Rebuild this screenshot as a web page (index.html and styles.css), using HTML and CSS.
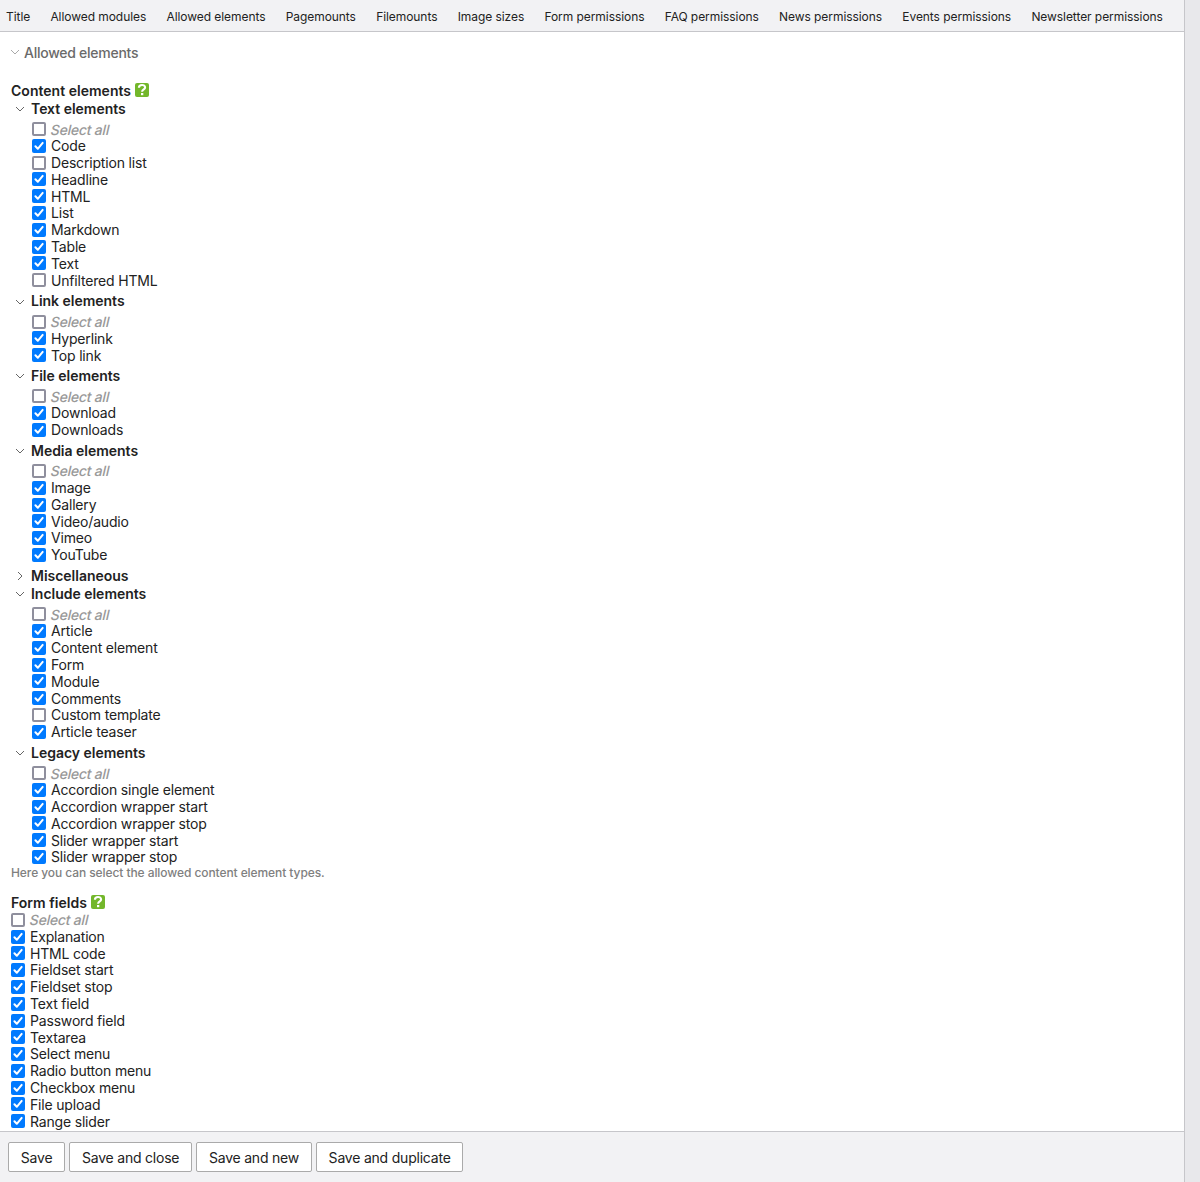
FILE: index.html
```
<!DOCTYPE html>
<html lang="en">
<head>
<meta charset="utf-8">
<title>Allowed elements</title>
<link rel="stylesheet" href="styles.css">
</head>
<body>
<svg class="sprite" width="0" height="0">
  <symbol id="down" viewBox="0 0 10 6"><path d="M1 1l4 4 4-4" fill="none" stroke="currentColor"/></symbol>
  <symbol id="right" viewBox="0 0 6 10"><path d="M1 1l4 4-4 4" fill="none" stroke="currentColor"/></symbol>
  <symbol id="help" viewBox="0 0 14 14"><rect width="14" height="14" rx="2" fill="#73b72b"/><path d="M3.9 4.7C4 2.7 5.4 2 7 2s3.1.8 3.1 2.5C10.1 6.4 7.1 6.4 7.1 8.8" fill="none" stroke="#fff" stroke-width="2.1"/><rect x="6" y="10" width="2.3" height="2.2" fill="#fff"/></symbol>
</svg>
<div class="page">
  <nav class="tabs">
    <a>Title</a><a>Allowed modules</a><a>Allowed elements</a><a>Pagemounts</a><a>Filemounts</a><a>Image sizes</a><a>Form permissions</a><a>FAQ permissions</a><a>News permissions</a><a>Events permissions</a><a>Newsletter permissions</a>
  </nav>
  <main class="content">
    <div class="legend"><svg class="chev"><use href="#down"/></svg>Allowed elements</div>
    <section class="field">
      <h3 class="title">Content elements <svg class="help"><use href="#help"/></svg></h3>
      <h4 class="group"><svg class="chev"><use href="#down"/></svg>Text elements</h4>
      <div class="list first">
        <label class="all"><input type="checkbox"><span>Select all</span></label>
        <label><input type="checkbox" checked><span>Code</span></label>
        <label><input type="checkbox"><span>Description list</span></label>
        <label><input type="checkbox" checked><span>Headline</span></label>
        <label><input type="checkbox" checked><span>HTML</span></label>
        <label><input type="checkbox" checked><span>List</span></label>
        <label><input type="checkbox" checked><span>Markdown</span></label>
        <label><input type="checkbox" checked><span>Table</span></label>
        <label><input type="checkbox" checked><span>Text</span></label>
        <label><input type="checkbox"><span>Unfiltered HTML</span></label>
      </div>
      <h4 class="group"><svg class="chev"><use href="#down"/></svg>Link elements</h4>
      <div class="list second">
        <label class="all"><input type="checkbox"><span>Select all</span></label>
        <label><input type="checkbox" checked><span>Hyperlink</span></label>
        <label><input type="checkbox" checked><span>Top link</span></label>
      </div>
      <h4 class="group"><svg class="chev"><use href="#down"/></svg>File elements</h4>
      <div class="list">
        <label class="all"><input type="checkbox"><span>Select all</span></label>
        <label><input type="checkbox" checked><span>Download</span></label>
        <label><input type="checkbox" checked><span>Downloads</span></label>
      </div>
      <h4 class="group"><svg class="chev"><use href="#down"/></svg>Media elements</h4>
      <div class="list">
        <label class="all"><input type="checkbox"><span>Select all</span></label>
        <label><input type="checkbox" checked><span>Image</span></label>
        <label><input type="checkbox" checked><span>Gallery</span></label>
        <label><input type="checkbox" checked><span>Video/audio</span></label>
        <label><input type="checkbox" checked><span>Vimeo</span></label>
        <label><input type="checkbox" checked><span>YouTube</span></label>
      </div>
      <h4 class="group"><svg class="chev side"><use href="#right"/></svg>Miscellaneous</h4>
      <h4 class="group"><svg class="chev"><use href="#down"/></svg>Include elements</h4>
      <div class="list">
        <label class="all"><input type="checkbox"><span>Select all</span></label>
        <label><input type="checkbox" checked><span>Article</span></label>
        <label><input type="checkbox" checked><span>Content element</span></label>
        <label><input type="checkbox" checked><span>Form</span></label>
        <label><input type="checkbox" checked><span>Module</span></label>
        <label><input type="checkbox" checked><span>Comments</span></label>
        <label><input type="checkbox"><span>Custom template</span></label>
        <label><input type="checkbox" checked><span>Article teaser</span></label>
      </div>
      <h4 class="group"><svg class="chev"><use href="#down"/></svg>Legacy elements</h4>
      <div class="list last">
        <label class="all"><input type="checkbox"><span>Select all</span></label>
        <label><input type="checkbox" checked><span>Accordion single element</span></label>
        <label><input type="checkbox" checked><span>Accordion wrapper start</span></label>
        <label><input type="checkbox" checked><span>Accordion wrapper stop</span></label>
        <label><input type="checkbox" checked><span>Slider wrapper start</span></label>
        <label><input type="checkbox" checked><span>Slider wrapper stop</span></label>
      </div>
      <p class="tip">Here you can select the allowed content element types.</p>
    </section>
    <section class="field">
      <h3 class="title">Form fields <svg class="help"><use href="#help"/></svg></h3>
      <div class="list flat">
        <label class="all"><input type="checkbox"><span>Select all</span></label>
        <label><input type="checkbox" checked><span>Explanation</span></label>
        <label><input type="checkbox" checked><span>HTML code</span></label>
        <label><input type="checkbox" checked><span>Fieldset start</span></label>
        <label><input type="checkbox" checked><span>Fieldset stop</span></label>
        <label><input type="checkbox" checked><span>Text field</span></label>
        <label><input type="checkbox" checked><span>Password field</span></label>
        <label><input type="checkbox" checked><span>Textarea</span></label>
        <label><input type="checkbox" checked><span>Select menu</span></label>
        <label><input type="checkbox" checked><span>Radio button menu</span></label>
        <label><input type="checkbox" checked><span>Checkbox menu</span></label>
        <label><input type="checkbox" checked><span>File upload</span></label>
        <label><input type="checkbox" checked><span>Range slider</span></label>
      </div>
    </section>
  </main>
  <footer class="actions">
    <button>Save</button><button>Save and close</button><button>Save and new</button><button>Save and duplicate</button>
  </footer>
</div>
</body>
</html>
```
FILE: styles.css
```
* { box-sizing: border-box; }
body {
  margin: 0;
  background: #e8e8eb;
  color: #222;
  font: 14px/16.8px Inter, "Liberation Sans", sans-serif;
  letter-spacing: -0.18px;
}
.sprite { display: none; }
.page {
  width: 1185px;
  height: 1182px;
  display: flex;
  flex-direction: column;
  background: #fff;
  border-right: 1px solid #c6c6ca;
  overflow: hidden;
}
.tabs {
  flex: none;
  height: 32px;
  display: flex;
  align-items: center;
  gap: 20.25px;
  padding: 3.4px 0 0 6px;
  background: #f2f2f4;
  border-bottom: 1px solid #c6c6ca;
  font-size: 12px;
  letter-spacing: -0.065px;
  white-space: nowrap;
}
.content { flex: 1; min-height: 0; padding: 12px 11px 0; overflow: hidden; }
.legend {
  display: flex;
  align-items: center;
  height: 18px;
  gap: 4px;
  color: #6a6a6a;
  font-weight: 500;
  letter-spacing: -0.26px;
}
.legend .chev { color: #aaa; margin: -2px 0 0 -1px; }
.chev { width: 10px; height: 6px; color: #666; }
.chev.side { width: 6px; height: 10px; margin: 0 2px; }
.field { margin-top: 20px; }
.field + .field { margin-top: 14px; }
.title, .group {
  margin: 0;
  height: 18px;
  display: flex;
  align-items: center;
  font-size: 14px;
  font-weight: 600;
  letter-spacing: -0.02px;
}
.title { gap: 4px; letter-spacing: 0.02px; }
.help { width: 14px; height: 14px; margin: -2px 0 0 0.4px; }
.group { padding-left: 4px; gap: 6px; }
.list { display: flex; flex-direction: column; padding: 2.6px 0 3.9px 21px; }
.list.first { padding-top: 3px; }
.list.second { padding-bottom: 3.5px; }
.list.last { padding-bottom: 0; }
.list.flat { padding: 0; margin-top: -0.5px; }
label { display: flex; align-items: center; height: 16.8px; gap: 5px; }
label span { padding-top: 0.9px; }
.all { color: #999; font-weight: 500; letter-spacing: -0.22px; }
.all span { transform: skewX(-13deg); }
input {
  appearance: none;
  width: 14px;
  height: 14px;
  margin: -0.6px 0 0;
  border: 2px solid #8f8f9d;
  border-radius: 2px;
  background: #fff;
}
input:checked {
  border: 0;
  background: #007aff url("data:image/svg+xml,%3Csvg xmlns='http://www.w3.org/2000/svg' viewBox='0 0 14 14'%3E%3Cpath d='M3.4 7.3l2.4 2.5 4.9-5.9' fill='none' stroke='white' stroke-width='2' stroke-linecap='round' stroke-linejoin='round'/%3E%3C/svg%3E");
}
.tip {
  margin: -0.6px 0 0;
  height: 15px;
  line-height: 15px;
  font-size: 12px;
  font-weight: 500;
  letter-spacing: -0.08px;
  color: #808080;
}
.actions {
  flex: none;
  height: 51px;
  display: flex;
  gap: 4px;
  padding: 10px 8px;
  background: #f2f2f4;
  border-top: 1px solid #c6c6ca;
}
button {
  height: 30px;
  padding: 2px 11.8px 0;
  border: 1px solid #aaa;
  border-radius: 2px;
  background: #fff;
  color: #222;
  font: inherit;
  letter-spacing: -0.21px;
}
```
